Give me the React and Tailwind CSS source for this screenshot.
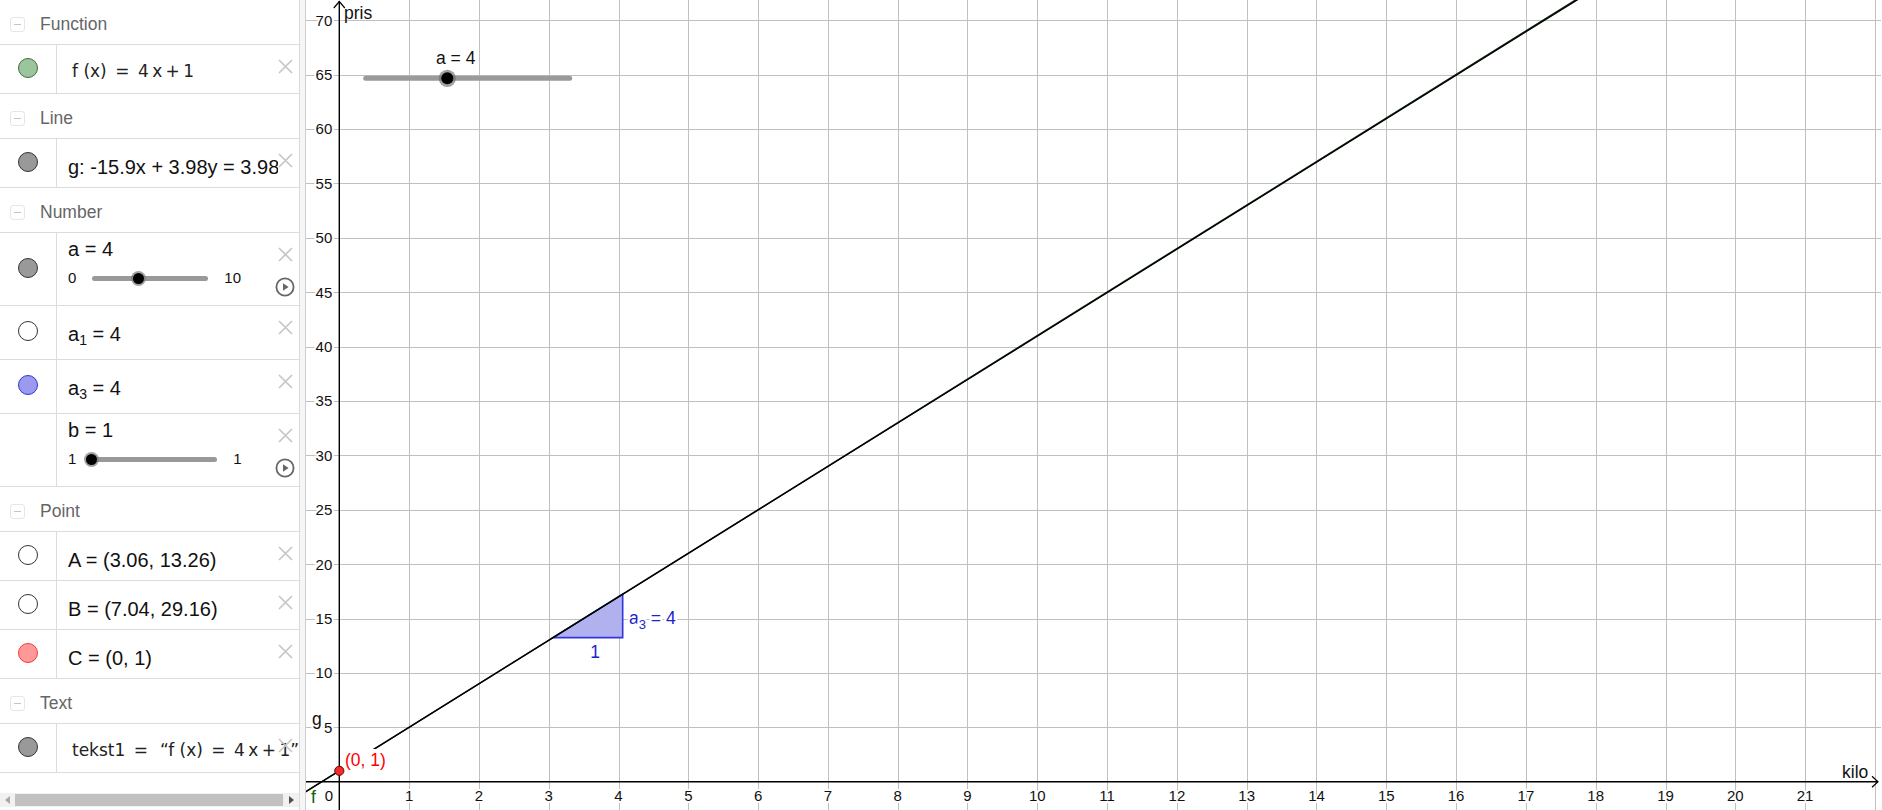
import React from 'react'

// graphics view geometry (px per unit, origin inside the view)
const OX = 33.3
const OY = 781.7
const UX = 69.8
const UY = 10.88
const W = 1575
const H = 810

const sx = (x) => OX + x * UX
const sy = (y) => OY - y * UY
const crisp = (v) => Math.round(v) + 0.5

const xGrid = Array.from({ length: 22 }, (_, i) => i + 1)
const xLabels = Array.from({ length: 21 }, (_, i) => i + 1)
const yGrid = Array.from({ length: 14 }, (_, i) => (i + 1) * 5)

function CloseIcon() {
  return (
    <svg width="15" height="15" viewBox="0 0 15 15" className="absolute right-[6px] top-[14px]">
      <path d="M1 1L14 14M14 1L1 14" stroke="#c6c6c6" strokeWidth="1.7" />
    </svg>
  )
}

function PlayIcon() {
  return (
    <svg width="20" height="20" viewBox="0 0 20 20" className="absolute right-[4px] top-[44px]">
      <circle cx="10" cy="10" r="8.6" fill="none" stroke="#666" strokeWidth="1.8" />
      <path d="M8 6.2L13.6 10L8 13.8Z" fill="#666" />
    </svg>
  )
}

function Header({ label }) {
  return (
    <div className="flex h-[45px] items-center border-b border-[#dcdcdc] pt-[5px]">
      <div className="ml-[10px] flex h-[15px] w-[15px] items-center justify-center rounded-[3px] border border-[#e6e6e6]">
        <div className="h-px w-[7px] bg-[#c4c4c4]" />
      </div>
      <span className="ml-[15px] text-[17.5px] text-[#666]">{label}</span>
    </div>
  )
}

function Row({ dot, className, play, children }) {
  return (
    <div className={`relative flex border-b border-[#dcdcdc] ${className}`}>
      <div className="flex w-[57px] shrink-0 items-center justify-center border-r border-[#dcdcdc] pb-[3px]">
        {dot && <div className={`h-[20px] w-[20px] rounded-full border-[1.5px] ${dot}`} />}
      </div>
      <div className="min-w-0 flex-1 overflow-hidden pl-[11px]">{children}</div>
      <CloseIcon />
      {play && <PlayIcon />}
    </div>
  )
}

function Plain({ children }) {
  return <div className="whitespace-nowrap pt-[16px] text-[20px] leading-[24px] text-[#111]">{children}</div>
}

function MathText({ children }) {
  return (
    <div className="whitespace-nowrap pl-[4px] pt-[14px] font-['DejaVu_Sans',sans-serif] text-[17px] leading-[24px] text-[#222]">
      {children}
    </div>
  )
}

function Knob({ className }) {
  return (
    <div className={`absolute top-[-5px] flex h-[15px] w-[15px] items-center justify-center rounded-full bg-[#7a7a7a]/70 ${className}`}>
      <div className="h-[11px] w-[11px] rounded-full bg-black" />
    </div>
  )
}

function SliderRow({ label, min, max, track, knob, gap }) {
  return (
    <div className="pt-[4px]">
      <div className="whitespace-nowrap text-[20px] leading-[24px] text-[#111]">{label}</div>
      <div className="mt-[5px] flex h-[24px] items-center text-[15px] text-[#111]">
        <span>{min}</span>
        <div className={`relative h-[5px] rounded-full bg-[#999] ${gap} ${track}`}>
          <Knob className={knob} />
        </div>
        <span className="ml-[16px]">{max}</span>
      </div>
    </div>
  )
}

const fx = 'f (x)\u2002=\u20024\u2009x\u2009+\u20091'

function Sidebar() {
  return (
    <aside className="flex w-[300px] shrink-0 flex-col border-r border-[#dadada]">
      <Header label="Function" />
      <Row className="h-[49px]" dot="bg-[#9dc59d] border-[#3d6e3d]">
        <MathText>{fx}</MathText>
      </Row>
      <Header label="Line" />
      <Row className="h-[49px]" dot="bg-[#999999] border-[#333333]">
        <Plain>
          <span className="block w-[210px] overflow-hidden">g: -15.9x + 3.98y = 3.98</span>
        </Plain>
      </Row>
      <Header label="Number" />
      <Row className="h-[73px]" dot="bg-[#999999] border-[#333333]" play>
        <SliderRow label="a = 4" min="0" max="10" gap="ml-[16px]" track="w-[116px]" knob="left-[39px]" />
      </Row>
      <Row className="h-[54px]" dot="bg-white border-[#333333]">
        <Plain>
          a<sub className="text-[14px]">1</sub> = 4
        </Plain>
      </Row>
      <Row className="h-[54px]" dot="bg-[#9a9aee] border-[#3434d8]">
        <Plain>
          a<sub className="text-[14px]">3</sub> = 4
        </Plain>
      </Row>
      <Row className="h-[73px]" play>
        <SliderRow label="b = 1" min="1" max="1" gap="ml-[13px]" track="w-[128px]" knob="left-[-5px]" />
      </Row>
      <Header label="Point" />
      <Row className="h-[49px]" dot="bg-white border-[#333333]">
        <Plain>A = (3.06, 13.26)</Plain>
      </Row>
      <Row className="h-[49px]" dot="bg-white border-[#333333]">
        <Plain>B = (7.04, 29.16)</Plain>
      </Row>
      <Row className="h-[49px]" dot="bg-[#ff9999] border-[#ff3333]">
        <Plain>C = (0, 1)</Plain>
      </Row>
      <Header label="Text" />
      <Row className="h-[49px]" dot="bg-[#999999] border-[#333333]">
        <MathText>{'tekst1\u2002=\u2002\u2009“' + fx + '”'}</MathText>
      </Row>

      <div className="mb-[3px] mt-auto flex h-[14px] items-center bg-[#f1f1f1]">
        <div className="flex w-[15px] justify-center">
          <div className="h-0 w-0 border-y-[4px] border-r-[5px] border-y-transparent border-r-[#a8a8a8]" />
        </div>
        <div className="h-[12px] w-[268px] bg-[#c1c1c1]" />
        <div className="flex flex-1 justify-center">
          <div className="h-0 w-0 border-y-[4px] border-l-[5px] border-y-transparent border-l-[#505050]" />
        </div>
      </div>
    </aside>
  )
}

function Graphics() {
  const xa = -OX / UX - 0.05
  const xb = (OY / UY - 1) / 4 + 0.05
  const gSlope = 15.9 / 3.98
  const labelBg = { stroke: '#fff', strokeWidth: 4, paintOrder: 'stroke' }

  return (
    <svg width={W} height={H} className="block">
      {xGrid.map((k) => (
        <line key={'gx' + k} x1={crisp(sx(k))} x2={crisp(sx(k))} y1={0} y2={H} stroke="#c0c0c0" strokeWidth="1" />
      ))}
      {yGrid.map((k) => (
        <line key={'gy' + k} x1={0} x2={W} y1={crisp(sy(k))} y2={crisp(sy(k))} stroke="#c0c0c0" strokeWidth="1" />
      ))}

      {/* axes */}
      <line x1={0} x2={W - 3} y1={OY} y2={OY} stroke="#000" strokeWidth="1.4" />
      <path d={`M${W - 9} ${OY - 5.5}L${W - 3} ${OY}L${W - 9} ${OY + 5.5}`} fill="none" stroke="#000" strokeWidth="1.2" />
      <line x1={OX} x2={OX} y1={1} y2={H} stroke="#000" strokeWidth="1.4" />
      <path d={`M${OX - 5.5} 8L${OX} 1.5L${OX + 5.5} 8`} fill="none" stroke="#000" strokeWidth="1.2" />

      {/* axis numbers */}
      <g fontSize="15" fill="#111">
        {xLabels.map((k) => (
          <text key={'lx' + k} x={sx(k)} y={800.5} textAnchor="middle" style={labelBg}>
            {k}
          </text>
        ))}
        {yGrid.map((k) => (
          <text key={'ly' + k} x={OX - 7} y={sy(k) + 5.4} textAnchor="end" style={labelBg}>
            {k}
          </text>
        ))}
        <text x={23} y={800.5} textAnchor="middle" style={labelBg}>
          0
        </text>
      </g>

      {/* slope triangle */}
      <polygon
        points={`${sx(3.06)},${sy(13.24)} ${sx(4.06)},${sy(13.24)} ${sx(4.06)},${sy(17.24)}`}
        fill="#b1b1ef"
        stroke="#3535dc"
        strokeWidth="1.6"
      />

      {/* f and g */}
      <line x1={sx(xa)} y1={sy(4 * xa + 1)} x2={sx(xb)} y2={sy(4 * xb + 1)} stroke="#0b2a0b" strokeWidth="1.5" />
      <line x1={sx(xa)} y1={sy(gSlope * xa + 1)} x2={sx(xb)} y2={sy(gSlope * xb + 1)} stroke="#000" strokeWidth="1.3" />

      {/* label box of C hides the lines */}
      <rect x={37} y={749} width={45} height={21} fill="#fff" />
      <circle cx={OX} cy={sy(1)} r="4.6" fill="#ee2b2b" stroke="#7a0000" strokeWidth="1" />

      <g fontSize="17.5">
        <text x={39} y={766} fill="#ff0000">
          (0, 1)
        </text>
        <text x={38} y={19} fill="#111">
          pris
        </text>
        <text x={1536} y={778} fill="#111">
          kilo
        </text>
        <text x={6} y={724.5} fill="#111" style={labelBg}>
          g
        </text>
        <text x={5} y={803} fill="#006400">
          f
        </text>
        <text x={289} y={658} fill="#2222cc" textAnchor="middle">
          1
        </text>
        <text x={323} y={624} fill="#2222cc" style={labelBg}>
          a
          <tspan dy="5" fontSize="13">
            3
          </tspan>
          <tspan dy="-5"> = 4</tspan>
        </text>
        <text x={149.7} y={64} fill="#111" textAnchor="middle">
          a = 4
        </text>
      </g>

      {/* slider for a */}
      <line x1={59.7} x2={263.7} y1={78.3} y2={78.3} stroke="#9a9a9a" strokeWidth="5" strokeLinecap="round" />
      <circle cx={141.3} cy={78.3} r="8.6" fill="#6e6e6e" fillOpacity="0.65" />
      <circle cx={141.3} cy={78.3} r="6" fill="#000" />
    </svg>
  )
}

export default function App() {
  return (
    <div className="flex h-[810px] w-[1882px] overflow-hidden bg-white font-['Liberation_Sans',Arial,sans-serif] text-black">
      <Sidebar />
      <div className="w-[6px] shrink-0 border-r border-[#cfcfcf] bg-[#f6f6f6]" />
      <main className="min-w-0 flex-1">
        <Graphics />
      </main>
    </div>
  )
}
